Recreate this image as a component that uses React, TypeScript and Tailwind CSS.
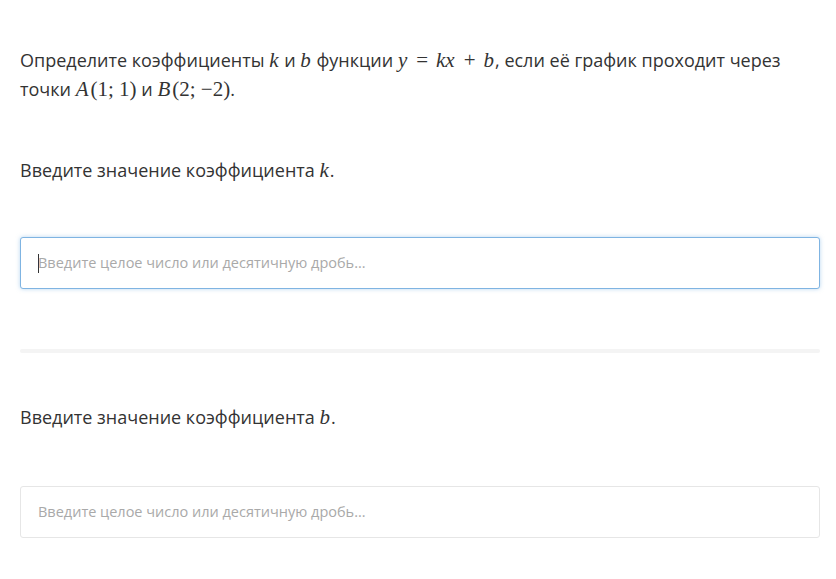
const sans = "font-['Open_Sans','Noto_Sans',sans-serif]";
const math = "font-['Liberation_Serif','DejaVu_Serif',serif]";

function M({ children }: { children: React.ReactNode }) {
    return <span className={`${math} text-[21px] whitespace-nowrap`}>{children}</span>;
}

function I({ children }: { children: React.ReactNode }) {
    return <i className={`${math} text-[21px] pr-px`}>{children}</i>;
}

// operator with KaTeX-like spacing
function Op({ children }: { children: React.ReactNode }) {
    return <span className="mx-[8px]">{children}</span>;
}

function NumberField({ focused }: { focused?: boolean }) {
    return (
        <div
            className={
                focused
                    ? "h-[52px] rounded-[3px] border border-[#7fb4e2] bg-white shadow-[0_0_4px_rgba(127,180,226,0.55)] flex items-center px-[17px]"
                    : "h-[52px] rounded-[3px] border border-[#e6e6e6] bg-white flex items-center px-[17px]"
            }
        >
            {focused && <span className="w-px h-[19px] bg-[#333] -mr-px" />}
            <span className="text-[14.5px] text-[#a9a9a9]">Введите целое число или десятичную дробь...</span>
        </div>
    );
}

export default function App() {
    return (
        <div className={`${sans} bg-white min-h-[579px] pl-5 pr-4 pt-[46px] text-[#333]`}>
            <p className="text-[18px] leading-[29px]">
                Определите коэффициенты <I>k</I> и <I>b</I> функции{" "}
                <M>
                    <i className="pr-px">y</i>
                    <Op>=</Op>
                    <i className="pr-px">kx</i>
                    <Op>+</Op>
                    <i className="pr-px">b</i>
                </M>
                , если её график проходит через точки{" "}
                <M>
                    <i className="pr-[2px]">A</i>(1;&nbsp;1)
                </M>{" "}
                и{" "}
                <M>
                    <i className="pr-[2px]">B</i>(2;&nbsp;−2)
                </M>
                .
            </p>

            <p className="mt-[52px] text-[18px] leading-[29px]">
                Введите значение коэффициента <I>k</I>.
            </p>
            <div className="mt-[52px]">
                <NumberField focused />
            </div>

            <div className="mt-[60px] h-1 rounded-full bg-[#f4f4f4]" />

            <p className="mt-[50px] text-[18px] leading-[29px]">
                Введите значение коэффициента <I>b</I>.
            </p>
            <div className="mt-[54px]">
                <NumberField />
            </div>
        </div>
    );
}
